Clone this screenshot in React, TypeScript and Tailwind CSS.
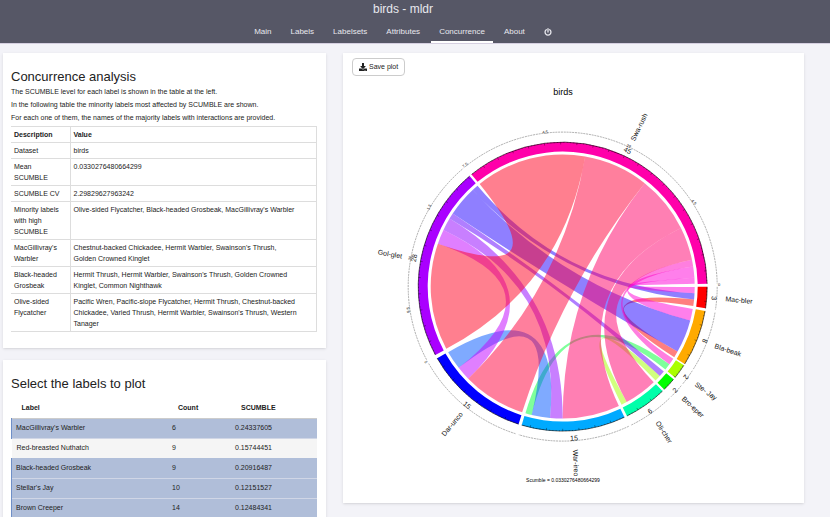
import { FaDownload } from "react-icons/fa";

const CX = 219.7;
const CY = 233.6;
const rad = (a: number) => (a * Math.PI) / 180;
const pt = (r: number, a: number) =>
  `${(CX + r * Math.cos(rad(a))).toFixed(2)} ${(CY + r * Math.sin(rad(a))).toFixed(2)}`;

// [name, start angle, end angle, colour], clockwise from east
const sectors: [string, number, number, string][] = [
  ["Mac-bler", 0.1, 8.6, "#ff0000"],
  ["Bla-beak", 9.7, 32.4, "#ffaa00"],
  ["Ste- Jay", 33, 39, "#aaff00"],
  ["Bro-eper", 39.9, 45.4, "#00ff00"],
  ["Oli-cher", 46.3, 63.6, "#00ffaa"],
  ["War-ireo", 64.7, 106.5, "#00aaff"],
  ["Dar-unco", 107.8, 150.3, "#0000ff"],
  ["Gol-glet", 151.8, 229.9, "#aa00ff"],
  ["Swa-rush", 230.9, 358.9, "#ff00aa"],
];

// [a1, a2, b1, b2, colour], in drawing order
const chords: [number, number, number, number, string][] = [
  [5.6, 8.4, 29.5, 32.3, "#ff0000"],
  [42.6, 45.3, 61, 63.5, "#a3ff00"],
  [36.1, 38.9, 103.6, 106.4, "#00ff37"],
  [95.5, 103.6, 142, 150.2, "#0055ff"],
  [2.9, 5.6, 227, 229.8, "#1f00ff"],
  [14.9, 29.5, 213.6, 227, "#1f00ff"],
  [40, 42.6, 211, 213.6, "#6100ff"],
  [90, 95.5, 205.4, 211, "#9100ff"],
  [135.7, 142, 199, 205.4, "#c100ff"],
  [0.2, 2.9, 356.2, 358.8, "#ff00d8"],
  [9.8, 14.9, 351.2, 356.2, "#ff00d8"],
  [33.1, 36.1, 348.3, 351.2, "#ff00c0"],
  [46.4, 61, 333.6, 348.3, "#ff0070"],
  [64.8, 90, 308.4, 333.6, "#ff0068"],
  [107.9, 135.7, 279.8, 308.4, "#ff003c"],
  [151.9, 199, 231, 279.8, "#ff0020"],
];

const arc = (r: number, a: number, b: number, sweep: 0 | 1) =>
  `A${r} ${r} 0 ${Math.abs(b - a) > 180 ? 1 : 0} ${sweep} ${pt(r, b)}`;

const ringPath = (a: number, b: number) =>
  `M${pt(144.5, a)}${arc(144.5, a, b, 1)}L${pt(135, b)}${arc(135, b, a, 0)}Z`;

const chordPath = (a1: number, a2: number, b1: number, b2: number) =>
  `M${pt(132, a1)}${arc(132, a1, a2, 1)}Q${CX} ${CY} ${pt(132, b1)}${arc(132, b1, b2, 1)}Q${CX} ${CY} ${pt(132, a1)}Z`;

// [text, x, y, rotation, font size]
const marks: [string, number, number, number, number][] = [
  ["Swa-rush", 296, 74, -64, 7],
  ["Mac-bler", 396, 247, 5, 7],
  ["Bla-beak", 385, 297, 18, 7],
  ["Ste- Jay", 363, 338, 36, 7],
  ["Bro-eper", 350, 354, 43, 7],
  ["Oli-cher", 321, 379, 57, 7],
  ["War-ireo", 233, 410, 88, 7],
  ["Dar-unco", 109, 371, -50, 7],
  ["Gol-glet", 47, 201, 10, 7],
  ["45", 284.5, 97.5, 25, 7],
  ["3", 371, 245, 94, 7],
  ["8", 362, 288, 110, 7],
  ["2", 343, 324, 126, 7],
  ["2", 332, 337, -47, 7],
  ["6", 307, 358, -35, 7],
  ["15", 231, 385, -4, 7],
  ["15", 124, 352, 40, 7],
  ["28", 71, 205, -80, 7],
  ["22", 286, 93, 25, 4],
  ["4.5", 202, 79, -6, 4],
  ["7.5", 122, 112, -40, 4],
  ["1.5", 86, 154, -60, 4],
  ["20", 67, 205, -80, 4],
  ["9.5", 65, 257, -95, 4],
  ["5", 83, 309, 60, 4],
  ["4.5", 351, 149, 50, 4],
  ["0", 376, 231, 0, 4],
];

function ChordPlot() {
  return (
    <svg viewBox="0 23 461 417" className="block w-full" role="img" aria-label="birds" fontFamily='"Liberation Sans", Arial, sans-serif'>
      {chords.map(([a1, a2, b1, b2, c], i) => (
        <path key={i} d={chordPath(a1, a2, b1, b2)} fill={c} fillOpacity={0.5} />
      ))}
      {sectors.map(([name, a, b, c]) => {
        const ticks: number[] = [];
        for (let t = a + 0.6; t < b; t += 1.3) ticks.push(t);
        return (
          <g key={name}>
            <path d={ringPath(a, b)} fill={c} />
            <path d={`M${pt(144.5, a)}${arc(144.5, a, b, 1)}`} fill="none" stroke="#000" strokeWidth={0.8} strokeOpacity={0.7} />
            {ticks.map((t, i) => (
              <path key={i} d={`M${pt(144.7, t)}L${pt(i % 5 === 4 ? 142.2 : 143.7, t)}`} stroke="#000" strokeWidth={0.6} strokeOpacity={0.6} />
            ))}
            <path d={`M${pt(154.5, a)}${arc(154.5, a, b, 1)}`} fill="none" stroke="#777" strokeWidth={0.6} strokeDasharray="2 0.8" />
          </g>
        );
      })}
      {marks.map(([s, x, y, r, size], i) => (
        <text key={i} x={x} y={y} fontSize={size} fill="#111" textAnchor="middle" dominantBaseline="central" transform={`rotate(${r} ${x} ${y})`}>
          {s}
        </text>
      ))}
      <text x={220} y={42} fontSize={9} fill="#000" textAnchor="middle">birds</text>
      <text x={220} y={429} fontSize={5} fill="#000" textAnchor="middle">Scumble = 0.0330276480664299</text>
    </svg>
  );
}

const tabs = ["Main", "Labels", "Labelsets", "Attributes", "Concurrence", "About"];

const facts = [
  ["Dataset", "birds"],
  ["Mean SCUMBLE", "0.0330276480664299"],
  ["SCUMBLE CV", "2.29829627963242"],
  ["Minority labels with high SCUMBLE", "Olive-sided Flycatcher, Black-headed Grosbeak, MacGillivray's Warbler"],
  ["MacGillivray's Warbler", "Chestnut-backed Chickadee, Hermit Warbler, Swainson's Thrush, Golden Crowned Kinglet"],
  ["Black-headed Grosbeak", "Hermit Thrush, Hermit Warbler, Swainson's Thrush, Golden Crowned Kinglet, Common Nighthawk"],
  ["Olive-sided Flycatcher", "Pacific Wren, Pacific-slope Flycatcher, Hermit Thrush, Chestnut-backed Chickadee, Varied Thrush, Hermit Warbler, Swainson's Thrush, Western Tanager"],
];

const labels: [string, string, string, boolean][] = [
  ["MacGillivray's Warbler", "6", "0.24337605", true],
  ["Red-breasted Nuthatch", "9", "0.15744451", false],
  ["Black-headed Grosbeak", "9", "0.20916487", true],
  ["Stellar's Jay", "10", "0.12151527", true],
  ["Brown Creeper", "14", "0.12484341", true],
];

export default function App() {
  return (
    <div className="h-screen overflow-hidden bg-[#f3f3f8] font-['Liberation_Sans',Arial,sans-serif] text-[7px] text-[#222]">
      <header className="border-b border-[#d5cfe0] bg-[#565766] pr-6 text-[#e8e8ee]">
        <h1 className="pt-0.5 text-center text-xs leading-[14px]">birds - mldr</h1>
        <nav className="flex h-[27px] justify-center gap-[3px] text-[8px]">
          {tabs.map((t) => (
            <a key={t} href="#" className={t === "Concurrence" ? "border-b-2 border-white px-2 pt-2.5 leading-3" : "px-2 pt-2.5 leading-3"}>
              {t}
            </a>
          ))}
          <button aria-label="Quit" className="px-2 pt-1">
            <svg viewBox="0 0 16 16" className="size-2" fill="none" stroke="currentColor" strokeWidth={2.6} strokeLinecap="round">
              <path d="M8 1.5V8M4.6 3.4a5.9 5.9 0 1 0 6.8 0" />
            </svg>
          </button>
        </nav>
      </header>

      <main className="flex items-start gap-[17px] pt-[9px] pr-[26px] pl-[3px]">
        <div className="flex w-[323px] shrink-0 flex-col gap-3">
          <section className="bg-white py-4 pr-[9px] pl-2 shadow-sm">
            <h2 className="text-[13px] leading-4">Concurrence analysis</h2>
            <p className="leading-[13px]">The SCUMBLE level for each label is shown in the table at the left.</p>
            <p className="leading-[13px]">In the following table the minority labels most affected by SCUMBLE are shown.</p>
            <p className="leading-[13px]">For each one of them, the names of the majority labels with interactions are provided.</p>
            <table className="mt-0.5 w-full table-fixed border-collapse text-left align-top leading-[11px]">
              <thead>
                <tr className="border-y border-[#ddd]">
                  <th className="w-[59px] border-r border-[#ddd] px-[3px] py-0.5">Description</th>
                  <th className="border-r border-[#ddd] px-[3px] py-0.5">Value</th>
                </tr>
              </thead>
              <tbody>
                {facts.map(([k, v]) => (
                  <tr key={k} className="border-b border-[#ddd] align-top">
                    <td className="border-r border-[#ddd] px-[3px] py-0.5">{k}</td>
                    <td className="border-r border-[#ddd] py-0.5 pr-[17px] pl-[3px]">{v}</td>
                  </tr>
                ))}
              </tbody>
            </table>
          </section>

          <section className="bg-white py-4 pr-[9px] pl-2 shadow-sm">
            <h2 className="text-[13px] leading-4">Select the labels to plot</h2>
            <table className="mt-1.5 w-full table-fixed border-collapse text-left">
              <thead>
                <tr className="h-5 border-b border-[#ccc]">
                  <th className="pl-2.5">Label</th>
                  <th className="w-[63px] pl-1.5">Count</th>
                  <th className="w-[82px] pl-1.5">SCUMBLE</th>
                </tr>
              </thead>
              <tbody>
                {labels.map(([n, c, s, on]) => (
                  <tr key={n} className={on ? "h-5 border-b border-[#d0d6e6] bg-[#b0bed9]" : "h-5 bg-[#f5f5f5]"}>
                    <td className={on ? "border-l border-[#6f8fc8] pl-1" : "pl-[5px]"}>{n}</td>
                    <td>{c}</td>
                    <td>{s}</td>
                  </tr>
                ))}
              </tbody>
            </table>
          </section>
        </div>

        <section className="min-w-0 flex-1 bg-white pb-2.5 shadow-sm">
          <button className="mt-[5px] ml-[9px] flex h-[18px] items-center gap-0.5 rounded-sm border border-[#ccc] px-1.5 text-[#222]">
            <FaDownload size={8} />
            Save plot
          </button>
          <ChordPlot />
        </section>
      </main>
    </div>
  );
}
